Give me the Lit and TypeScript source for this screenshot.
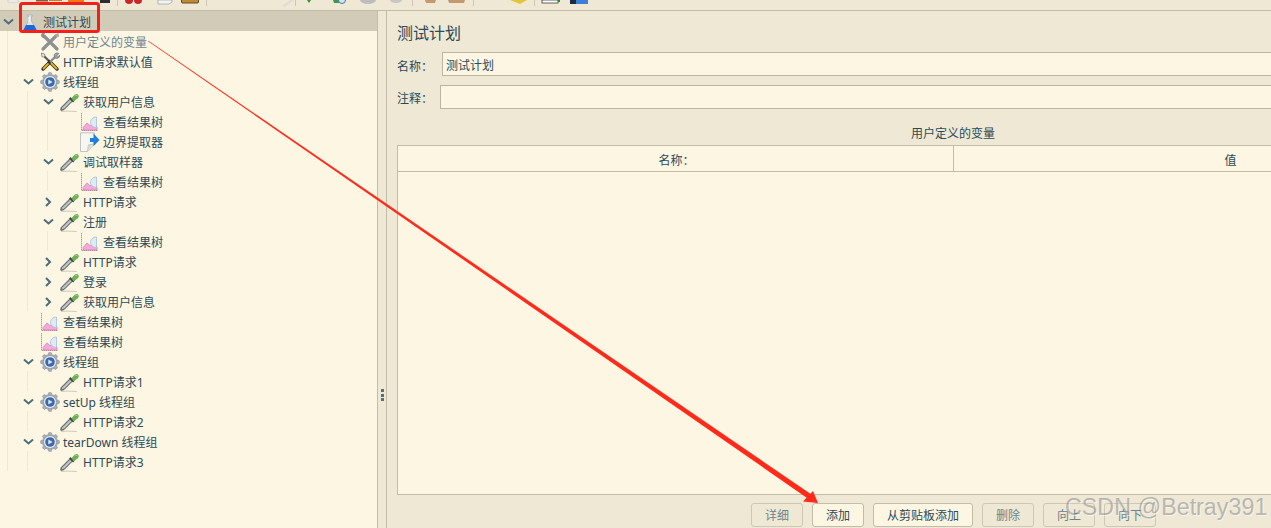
import { LitElement, html, css, svg } from "lit";
import { customElement } from "lit/decorators.js";

type Kind = "flask" | "tools-off" | "tools" | "gear" | "dropper" | "chart" | "extract";
interface TreeNode { label: string; kind: Kind; open?: boolean; closed?: boolean; off?: boolean; selected?: boolean; children?: TreeNode[]; }

const chart = (): TreeNode => ({ label: "查看结果树", kind: "chart" });
const sampler = (label: string, children?: TreeNode[], closed = false): TreeNode => ({ label, kind: "dropper", children, closed });

const tree: TreeNode = {
  label: "测试计划", kind: "flask", selected: true, children: [
    { label: "用户定义的变量", kind: "tools-off", off: true },
    { label: "HTTP请求默认值", kind: "tools" },
    { label: "线程组", kind: "gear", children: [
      sampler("获取用户信息", [chart(), { label: "边界提取器", kind: "extract" }]),
      sampler("调试取样器", [chart()]),
      sampler("HTTP请求", undefined, true),
      sampler("注册", [chart()]),
      sampler("HTTP请求", undefined, true),
      sampler("登录", undefined, true),
      sampler("获取用户信息", undefined, true),
    ] },
    chart(),
    chart(),
    { label: "线程组", kind: "gear", children: [sampler("HTTP请求1")] },
    { label: "setUp 线程组", kind: "gear", children: [sampler("HTTP请求2")] },
    { label: "tearDown 线程组", kind: "gear", children: [sampler("HTTP请求3")] },
  ],
};

const icons: Record<Kind, unknown> = {
  flask: svg`<path d="M7.500 3h5v1h-1v5l5 9c.3.8-.2 1.500-1 1.500h-11c-.8 0-1.300-.7-1-1.500l5-9V4h-1z" fill="#e4e7e8" stroke="#aab3bb" stroke-width=".8"/><path d="M6 13h8l2.600 5c.2.7-.2 1.200-.8 1.200H4.200c-.6 0-1-.5-.8-1.200z" fill="#1f66d8"/><path d="M8.500 5h1v5h-1z" fill="#fff"/>`,
  "tools-off": svg`<path d="M4 4l13 13M16 4L3 17" stroke="#8d9193" stroke-width="3.200" stroke-linecap="round"/><path d="M15 2.500l3.500-1.500 .5 3.500-3 1.500z" fill="#a8abac"/><path d="M1 3a3 3 0 0 1 4-2l-1 2 2 1-1 2a3 3 0 0 1-4-3z" fill="#8d9193"/>`,
  tools: svg`<path d="M4.500 4.500l5 5" stroke="#57595a" stroke-width="2.200"/><path d="M9.500 9.500l7.500 7.500" stroke="#2c2c2c" stroke-width="3.400" stroke-linecap="round"/><path d="M10.500 10.500l6 6" stroke="#e8b813" stroke-width="1.800" stroke-linecap="round"/><path d="M15.500 4.500L9 11" stroke="#8a8e90" stroke-width="2.400"/><path d="M9 11l-6 6" stroke="#2c2c2c" stroke-width="3.400" stroke-linecap="round"/><path d="M8 12l-4.500 4.500" stroke="#e8b813" stroke-width="1.800" stroke-linecap="round"/><path d="M14 3a3.300 3.300 0 0 1 5-1.500l-2 2 1 1 2-1.500a3.300 3.300 0 0 1-5 3z" fill="#9ba0a3" stroke="#666" stroke-width=".5"/><path d="M1.500 1l3 1 .5 2-1.200 1-2-.5z" fill="#e8e8e4" stroke="#555" stroke-width=".6"/>`,
  gear: svg`<g fill="#a7adb3" stroke="#8b9199" stroke-width=".5"><circle cx="10" cy="10" r="7.600"/><rect x="8.300" y=".6" width="3.400" height="3.500" rx="1"/><rect x="8.300" y="15.900" width="3.400" height="3.500" rx="1"/><rect x=".6" y="8.300" width="3.500" height="3.400" rx="1"/><rect x="15.900" y="8.300" width="3.500" height="3.400" rx="1"/><rect x="8.300" y=".6" width="3.400" height="3.500" rx="1" transform="rotate(45 10 10)"/><rect x="8.300" y="15.900" width="3.400" height="3.500" rx="1" transform="rotate(45 10 10)"/><rect x=".6" y="8.300" width="3.500" height="3.400" rx="1" transform="rotate(45 10 10)"/><rect x="15.900" y="8.300" width="3.500" height="3.400" rx="1" transform="rotate(45 10 10)"/></g><circle cx="10" cy="10" r="6" fill="#e8ecf0"/><circle cx="10" cy="10" r="4.800" fill="#3c69ad"/><path d="M8.300 7.600l4.300 2.400-4.300 2.400z" fill="#dbe6f5"/>`,
  dropper: svg`<path d="M1 19.300c5-.4 11-.3 16 .2" stroke="#d5cfbe" stroke-width="1.200" fill="none"/><path d="M.8 18.200l.5-2.800 9-9 2.400 2.400-9 9z" fill="#a4a9aa" stroke="#3d464b" stroke-width=".9"/><path d="M3 16.500l8-8" stroke="#dfe3e3" stroke-width=".9"/><path d="M9.800 5.800l4 4" stroke="#3f4648" stroke-width="2"/><path d="M11.500 6.300l3-3.600c1.200-1.200 3.400-.8 4 .4.700 1.300.2 2.800-1 3.500l-3.800 2.900z" fill="#6db257"/><path d="M14.800 3.600c.8-.7 1.900-.6 2.400.2" stroke="#b4dca4" stroke-width="1" fill="none"/>`,
  chart: svg`<path d="M1.500 1v17.500H18" stroke="#a9a493" stroke-width="1" fill="none" stroke-dasharray="1.500 .5"/><path d="M3 18v-2.500l4-4.500 3 2.500 3-1 4 2.500v3z" fill="#f5a8dc" stroke="#d070a8" stroke-width=".6"/><path d="M16.500 5c-3.500 0-6 2.300-6 5.500 0 2.500 2.500 5 6 5z" fill="#dcebf6" stroke="#a3c0d8" stroke-width=".8"/>`,
  extract: svg`<path d="M.5 .8h14v11l-7 7.700H.5z" fill="#f6f6f4" stroke="#c4c4bc" stroke-width="1"/><path d="M7.500 19.500l.8-6.500 6.200-1.200" fill="#dfdfd9" stroke="#bdbdb6" stroke-width=".8"/><path d="M10 6h3.500V1.500L19.500 8l-6 6.300V10H10z" fill="#1f7fdc"/>`,
};

@customElement("app-root")
export class AppRoot extends LitElement {
  static styles = css`
    :host { display: block; position: relative; width: 1271px; height: 528px; overflow: hidden; background: #eee8d5; color: #2c4a57; font-family: "Noto Sans", "Noto Sans CJK SC", sans-serif; font-size: 12px; }
    .toolbar { height: 10px; border-bottom: 1px solid #c4bcaa; background: #eee8d5; overflow: hidden; }
    .toolbar svg { display: block; }
    .main { display: flex; height: 517px; }
    .tree { width: 377px; flex: none; background: #fdf6e3; border-right: 1px solid #c4bcaa; overflow: hidden; }
    .row { display: flex; align-items: center; height: 20px; box-sizing: border-box; padding-top: 2px; white-space: nowrap; }
    .row.selected { background: #d2cbb8; }
    .row.off .text { color: #6c8590; }
    .arrow { width: 20px; flex: none; display: flex; }
    .arrow svg { display: block; margin-left: 3px; }
    .icon { width: 20px; height: 20px; flex: none; display: block; }
    .text { margin-left: 3px; line-height: 18px; padding-top: 2px; }
    .kids { margin-left: 7px; padding-left: 12px; border-left: 1px solid #efe8d5; }
    .splitter { width: 8px; flex: none; display: flex; flex-direction: column; align-items: center; gap: 1.500px; padding-top: 378px; box-sizing: content-box; border-right: 1px solid #c4bcaa; }
    .splitter i { width: 3px; height: 3px; background: #4f7383; display: block; }
    .panel { flex: 1; min-width: 0; overflow: hidden; display: flex; flex-direction: column; padding-left: 10px; }
    .title { font-size: 16px; line-height: 22px; margin-top: 11px; height: 30px; }
    .field { display: flex; align-items: center; height: 24px; width: 1100px; margin-bottom: 9px; }
    .field label { width: 43px; flex: none; margin-top: 2px; }
    .field.name label { width: 45px; margin-top: 4px; }
    .input { flex: 1; height: 22px; line-height: 22px; border: 1px solid #bdb5a2; background: #fdf6e3; padding-left: 3px; }
    .field.name .input { line-height: 26px; }
    .caption { width: 1112px; height: 27px; padding-top: 6px; box-sizing: border-box; }
    .caption span { display: block; width: 112px; text-align: center; margin-left: 500px; }
    .table { flex: 1; display: flex; flex-direction: column; width: 1109px; border: 1px solid #c4bcaa; border-right: 0; background: #fdf6e3; min-height: 0; }
    .thead { display: grid; grid-template-columns: 556px 1fr; height: 25px; border-bottom: 1px solid #c4bcaa; flex: none; }
    .thead div { text-align: center; line-height: 30px; height: 25px; }
    .thead div:first-child { border-right: 1px solid #c4bcaa; padding-left: 2px; box-sizing: border-box; }
    .buttons { display: flex; gap: 9px; flex: none; height: 33px; padding: 8px 0 0 354px; box-sizing: border-box; }
    button { font: inherit; color: inherit; height: 24px; padding: 2px 13px 0; margin: 0; border: 1px solid #c4bcaa; border-radius: 3px; background: #fdf6e3; line-height: 20px; white-space: nowrap; }
    button:disabled { background: #eee8d5; color: #68858f; border-color: #cdc7b6; }
    .overlay { position: absolute; left: 0; top: 0; pointer-events: none; }
    .mark { position: absolute; left: 1065px; top: 492px; font-family: "Liberation Sans", sans-serif; font-size: 23.300px; line-height: 30px; color: rgba(125, 125, 125, 0.5); white-space: nowrap; text-shadow: 1px 1px 0 rgba(255,255,255,.5); pointer-events: none; }
  `;

  private node(n: TreeNode): unknown {
    const hasKids = !!n.children;
    const arrow = n.closed
      ? svg`<path d="M3 2l4 4-4 4" fill="none" stroke="#4d6d7b" stroke-width="2"/>`
      : hasKids ? svg`<path d="M1 3.500l4.500 4 4.500-4" fill="none" stroke="#4d6d7b" stroke-width="2"/>` : null;
    return html`
      <div class="row ${n.selected ? "selected" : ""} ${n.off ? "off" : ""}">
        <span class="arrow">${arrow ? html`<svg width="11" height="12" viewBox="0 0 11 12">${arrow}</svg>` : null}</span>
        <svg class="icon" viewBox="0 0 20 20">${icons[n.kind]}</svg>
        <span class="text">${n.label}</span>
      </div>
      ${hasKids ? html`<div class="kids">${n.children!.map((c) => this.node(c))}</div>` : null}`;
  }

  render() {
    return html`
      <div class="toolbar">
        <svg width="1271" height="10" viewBox="0 0 1271 10">
          <rect x="8" y="0" width="10" height="2" fill="#fff" stroke="#aaa" stroke-width=".5"/>
          <rect x="36" y="0" width="12" height="1.500" fill="#8c5a2a"/><rect x="49" y="0" width="13" height="1" fill="#e0761a"/>
          <rect x="68" y="0" width="16" height="2" fill="#ef7b10"/><rect x="100" y="0" width="10" height="3" fill="#2d2d2d"/>
          <rect x="117" y="0" width="1" height="6" fill="#cdc6b4"/>
          <circle cx="129" cy="0" r="4" fill="#c9282a"/><circle cx="138" cy="0" r="4" fill="#c9282a"/>
          <path d="M158 0h14v2l-3 2h-11z" fill="#f4f4f2" stroke="#9d9d98" stroke-width=".7"/>
          <rect x="181.500" y="-3" width="17" height="6" rx="1" fill="#c28a30" stroke="#5b4a2a"/>
          <rect x="206" y="0" width="1" height="6" fill="#cdc6b4"/>
          <path d="M282 6l8-6h4l-9 7z" fill="#e2ddd0"/><rect x="295" y="0" width="1" height="6" fill="#cdc6b4"/>
          <path d="M307 0h4l-2 3z" fill="#2d9a2d"/>
          <path d="M333 0h6v3h-5z" fill="#3a9a4a"/><circle cx="342" cy="0" r="3.500" fill="#d5e2ef" stroke="#4b78b5"/>
          <ellipse cx="368" cy="0" rx="8" ry="4" fill="#bdbdb9"/><ellipse cx="396" cy="0" rx="6" ry="3" fill="#c6c6c2"/>
          <rect x="412" y="0" width="1" height="6" fill="#cdc6b4"/>
          <path d="M425 0h11l-1 3h-9z" fill="#c49a6c"/><path d="M448 0h17l-1 3h-15z" fill="#c49a6c"/>
          <rect x="473" y="0" width="1" height="6" fill="#cdc6b4"/>
          <path d="M510 0h17l-7 4z" fill="#e5c33a"/><rect x="534" y="0" width="1" height="6" fill="#cdc6b4"/>
          <rect x="542" y="0" width="16" height="3" fill="#fff" stroke="#222" stroke-width=".7"/><rect x="558" y="0" width="2" height="2" fill="#2a8a2a"/>
          <rect x="570" y="0" width="6" height="4" fill="#1d2a44"/><rect x="576" y="0" width="12" height="4" fill="#3e7fd6"/>
        </svg>
      </div>
      <div class="main">
        <div class="tree">${this.node(tree)}</div>
        <div class="splitter"><i></i><i></i><i></i></div>
        <div class="panel">
          <div class="title">测试计划</div>
          <div class="field name"><label>名称：</label><div class="input">测试计划</div></div>
          <div class="field"><label>注释：</label><div class="input"></div></div>
          <div class="caption"><span>用户定义的变量</span></div>
          <div class="table">
            <div class="thead"><div>名称：</div><div>值</div></div>
          </div>
          <div class="buttons">
            <button disabled>详细</button><button>添加</button><button>从剪贴板添加</button><button disabled>删除</button><button disabled>向上</button><button disabled>向下</button>
          </div>
        </div>
      </div>
      <svg class="overlay" width="1271" height="528" viewBox="0 0 1271 528">
        <rect x="20.500" y="3.500" width="78" height="28" rx="2" fill="none" stroke="#f0201a" stroke-width="3"/>
        <path d="M148 41.200l.4-.4L811.500 494.500l-3 4.400z" fill="#ff2a1a"/>
        <path d="M818 503l-15-1.500 10-10.500z" fill="#ff2a1a"/>
      </svg>
      <div class="mark">CSDN @Betray391</div>
    `;
  }
}
